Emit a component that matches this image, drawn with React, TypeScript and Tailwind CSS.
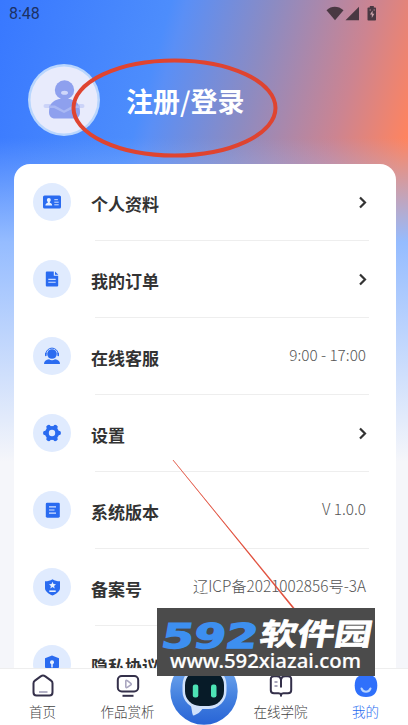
import type { ReactNode } from 'react'

interface MenuItem {
  label: string
  icon: ReactNode
  value?: string
  arrow?: boolean
}

const menuItems: MenuItem[] = [
  {
    label: '个人资料',
    arrow: true,
    icon: (
      <>
        <rect x="1" y="3.5" width="18" height="13" rx="1.6" fill="#2a6bf0" />
        <circle cx="6.8" cy="8" r="2" fill="#e8f1ff" />
        <path d="M3.4 13.6c0-2 1.6-2.4 2.4-2.8V9h2v1.8c.8.4 2.4.8 2.4 2.8z" fill="#e8f1ff" />
        <path d="M12.3 7.7h3.6M12.3 10.2h4.4M12.3 12.8h4.4" stroke="#cfe0ff" strokeWidth="1" />
      </>
    ),
  },
  {
    label: '我的订单',
    arrow: true,
    icon: (
      <>
        <path d="M4.8 2.5h7v4.2h4.4v9.8a1 1 0 0 1-1 1H4.8a1 1 0 0 1-1-1v-13a1 1 0 0 1 1-1z" fill="#2a6bf0" />
        <path d="M13 2.6l3.3 3.2H13z" fill="#2a6bf0" />
        <path d="M6.3 10.4h7.4M6.3 13.3h7.4" stroke="#cfe0ff" strokeWidth="1.1" />
      </>
    ),
  },
  {
    label: '在线客服',
    value: '9:00 - 17:00',
    icon: (
      <>
        <circle cx="10" cy="8" r="4.8" fill="#2a6bf0" />
        <path d="M3.8 8.3a6.2 6.2 0 0 1 12.4 0" fill="none" stroke="#2a6bf0" strokeWidth="1" />
        <rect x="3" y="6.7" width="1.6" height="3.6" rx=".8" fill="#2a6bf0" />
        <rect x="15.4" y="6.7" width="1.6" height="3.6" rx=".8" fill="#2a6bf0" />
        <path d="M2 18c0-3 2-4.3 5-4.7 1.6 1.2 4.4 1.2 6 0 3 .4 5 1.7 5 4.7z" fill="#2a6bf0" />
      </>
    ),
  },
  {
    label: '设置',
    arrow: true,
    icon: (
      <>
        <circle cx="10" cy="10" r="7" fill="#2a6bf0" />
        <path
          d="M3.300 10h13.400M6.600 4.200l6.800 11.600M13.400 4.200 6.600 15.800"
          stroke="#2a6bf0"
          strokeWidth="4.6"
          strokeLinecap="round"
        />
        <circle cx="10" cy="10" r="3.2" fill="#e0ebfe" />
      </>
    ),
  },
  {
    label: '系统版本',
    value: 'V 1.0.0',
    icon: (
      <>
        <rect x="3.8" y="2.7" width="14" height="15" rx="1.4" fill="#2a6bf0" />
        <path d="M7 6.9h7M7 10h5.5M7 13.2h7" stroke="#d6e4ff" strokeWidth="1.2" />
      </>
    ),
  },
  {
    label: '备案号',
    value: '辽ICP备2021002856号-3A',
    icon: (
      <>
        <path d="M10.5 2.2c2.3 1.4 4.5 2 7.5 2v7c0 3.3-4 5.8-7.5 7.4C7 17 3 14.5 3 11.2v-7c3 0 5.2-.6 7.5-2z" fill="#2a6bf0" />
        <path d="m10.5 4.8 1 2.3 2.5.2-1.9 1.6.6 2.5-2.2-1.3-2.2 1.3.6-2.5L7 7.3l2.5-.2z" fill="#e8f1ff" />
        <path d="M7.3 14.2h6.4" stroke="#e8f1ff" strokeWidth="1.6" />
      </>
    ),
  },
  {
    label: '隐私协议',
    icon: (
      <>
        <path d="m10 1.5 7 2.7v8c0 3.3-3.5 5.3-7 6.8-3.5-1.5-7-3.5-7-6.8v-8z" fill="#2a6bf0" />
        <circle cx="10" cy="8.3" r="2" fill="#e8f1ff" />
        <path d="M10 8.5v5" stroke="#e8f1ff" strokeWidth="1.5" />
      </>
    ),
  },
]

function StatusBar() {
  return (
    <div className="flex h-7 items-center justify-between pl-[9px] pr-[32px]">
      <span className="font-['Roboto',sans-serif] text-base leading-7 text-[#1c3164]">8:48</span>
      <svg width="50" height="16" viewBox="0 0 50 16" fill="#493842">
        <path d="M.5 4.3C5.5-.3 12-.3 17.500 4.3L9 14.2z" />
        <path d="M33 .8v13.4H19.5z" />
        <path d="M43.8 0h4v1.5h1.5a.8.8 0 0 1 .7.8v11.4a.8.8 0 0 1-.8.8h-6.9a.8.8 0 0 1-.8-.8V2.3a.8.8 0 0 1 .8-.8h1.5z" />
        <path d="M46.6 4.5l-2.6 4h1.800v3.5l2.6-4.3h-1.8z" fill="#c9a3aa" />
        <path d="M43.5 4H45M47.5 4H49" stroke="#b48490" strokeWidth="1.2" />
      </svg>
    </div>
  )
}

function Avatar() {
  return (
    <svg width="72" height="72" viewBox="0 0 72 72">
      <circle cx="36" cy="36" r="36" fill="#b9d6fd" />
      <circle cx="36" cy="36" r="33.5" fill="#e8ebfc" />
      <rect x="15.5" y="40" width="41" height="4" rx="2" fill="#cbd3f8" />
      <path d="M31 35c-6 1.5-10 5-10 13 0 4 2 6.5 6 6.5h19c4 0 6-2.500 6-6.5 0-8-4-11.5-10-13z" fill="#8ea0ee" />
      <circle cx="36.5" cy="26" r="9.7" fill="#8ea0ee" />
      <ellipse cx="36.5" cy="28.8" rx="3.5" ry="2" fill="#cfd7fa" />
      <path d="M21 41.5h6l9 5 9-5h7v2.5h-6l-10 5-10-5h-5z" fill="#a9b8f4" />
    </svg>
  )
}

function MenuRow({ item }: { item: MenuItem }) {
  return (
    <div className="flex h-[77px] shrink-0 items-start pl-[19px]">
      <div className="mt-[19px] flex size-[38px] shrink-0 items-center justify-center rounded-full bg-[#e0ebfe]">
        <svg width="20" height="20" viewBox="0 0 20 20">{item.icon}</svg>
      </div>
      <div className="ml-5 flex h-full flex-1 items-start justify-between">
        <span className="mt-[27px] text-[17px] leading-[26px] font-bold whitespace-nowrap text-[#333]">{item.label}</span>
        {item.value && (
          <span className="mt-[24px] mr-[30px] text-[15.3px] leading-[24px] font-light whitespace-nowrap text-[#555]">
            {item.value}
          </span>
        )}
        {item.arrow && (
          <svg className="mt-[32px] mr-[29px]" width="9" height="13" viewBox="0 0 9 13">
            <path d="m2 1.5 5 5-5 5" fill="none" stroke="#333" strokeWidth="2.2" />
          </svg>
        )}
      </div>
    </div>
  )
}

function NavItem({ label, active, children }: { label: string; active?: boolean; children: ReactNode }) {
  return (
    <div className="flex flex-col items-center pt-[5px]">
      <svg width="24" height="24" viewBox="0 0 24 24" fill="none" stroke="#34304a" strokeWidth="2">
        {children}
      </svg>
      <span className={`mt-[3px] text-[13.5px] leading-5 font-light ${active ? 'text-[#2a6bf0]' : 'text-[#444]'}`}>{label}</span>
    </div>
  )
}

function RobotButton() {
  return (
    <svg className="-mt-[12px]" width="68" height="68" viewBox="0 0 68 68">
      <defs>
        <linearGradient id="robot" x1="0" y1="0" x2="0" y2="1">
          <stop offset="0" stopColor="#80b4f2" />
          <stop offset=".6" stopColor="#4380df" />
          <stop offset="1" stopColor="#2864d6" />
        </linearGradient>
      </defs>
      <circle cx="34" cy="34" r="33.7" fill="url(#robot)" />
      <rect x="12.5" y="10" width="44" height="42" rx="18" fill="#cfe1fb" />
      <path d="M20 47c2 3 1.500 8 3 11.500 4-.5 8-4 10-7.500z" fill="#cfe1fb" />
      <rect x="15" y="13" width="39" height="36" rx="15" fill="#071b28" />
      <rect x="22.8" y="27.500" width="5.5" height="13" rx="2.2" fill="#4de3b5" />
      <rect x="41" y="27.500" width="5.5" height="13" rx="2.2" fill="#4de3b5" />
    </svg>
  )
}

function BottomNav() {
  return (
    <nav className="grid h-[57px] shrink-0 grid-cols-[85px_85px_68px_85px_85px] border-t border-[#eee] bg-white">
      <NavItem label="首页">
        <path d="M9.7 2.4 3.9 6.6C2.800 7.4 2.500 8 2.500 9.2v9c0 2 1 3.3 3 3.3h13c2 0 3-1.3 3-3.3v-9c0-1.2-.3-1.8-1.4-2.6l-5.8-4.200c-1.700-1.200-2.900-1.200-4.600 0z" />
        <path d="M8 18h8.5" stroke="#b4b2c6" />
      </NavItem>
      <NavItem label="作品赏析">
        <rect x="1.8" y="2" width="20.4" height="15.5" rx="4" />
        <path d="M6.5 21.8h11" />
        <path d="M9.8 7v5.8c0 1 .8 1 1.5.6l3.5-2.5c.6-.5.6-1 0-1.5l-3.5-2.8c-.7-.5-1.5-.5-1.5.4z" stroke="#aaa6c0" strokeWidth="1.6" />
      </NavItem>
      <RobotButton />
      <NavItem label="在线学院">
        <path d="M12 5.5C11.500 3 10 2.200 8 2.200H5c-2 0-3.200 1.200-3.200 3v11c0 2 1.200 3 3.200 3h4.500c1 0 2 .3 2.500 1.300.5-1 1.500-1.300 2.500-1.300H19c2 0 3.200-1 3.200-3v-11c0-1.800-1.200-3-3.200-3h-3c-2 0-3.500.8-4 3.300v8" />
        <path d="M5.5 8h3M5.5 12h3" stroke="#8d89a6" strokeWidth="1.5" />
        <path d="M12 20v2.5" />
      </NavItem>
      <NavItem label="我的" active>
        <path d="M12 .5C4 .5.7 4.3.7 11.5S4 23 12 23s11.3-4.300 11.3-11.500S20 .5 12 .5z" fill="#2f70fb" stroke="none" />
        <path d="M7.5 14.5c1.800 4.3 7.2 4.3 9 0" stroke="#b9d5ff" strokeLinecap="round" />
      </NavItem>
    </nav>
  )
}

function Watermark() {
  return (
    <svg className="absolute top-[608px] left-[157px] bg-[#4b4b4b]" width="218" height="68" viewBox="0 0 218 68">
      <g transform="skewX(-10)">
        <text x="10" y="40" textLength="96" lengthAdjust="spacingAndGlyphs" fill="#3d8ff0" stroke="#3d8ff0" strokeWidth="1.4" fontFamily="DejaVu Sans, sans-serif" fontWeight="700" fontSize="34">592</text>
        <text x="108" y="37.5" textLength="112" lengthAdjust="spacingAndGlyphs" fill="#fff" stroke="#fff" strokeWidth=".7" fontFamily="Noto Sans CJK SC, sans-serif" fontWeight="700" fontSize="30">软件园</text>
      </g>
      <text x="13" y="60" textLength="191" lengthAdjust="spacingAndGlyphs" fill="#fff" stroke="#fff" strokeWidth=".2" fontFamily="Noto Sans, sans-serif" fontWeight="500" fontSize="19">www.592xiazai.com</text>
    </svg>
  )
}

export default function App() {
  return (
    <div className="relative flex h-[725px] w-[408px] flex-col overflow-hidden bg-[linear-gradient(180deg,transparent_138px,#95bcff_242px,#f5f6fa_462px),linear-gradient(106deg,#3878ff_0px,#4d8dfc_165px,#5a8ff6_180px,#8c8bc2_265px,#cc8491_360px,#ff845f_430px)] bg-[length:408px_725px,408px_242px] bg-no-repeat font-['Noto_Sans_CJK_SC',sans-serif]">
      <StatusBar />
      <header className="flex h-[136px] shrink-0 items-start pt-9 pl-7">
        <Avatar />
        <h1 className="mt-[17px] ml-[26px] text-[27px] leading-[40px] font-bold whitespace-nowrap text-white">
          注册<span className="font-medium">/</span>登录
        </h1>
      </header>
      <main className="mr-[12px] ml-[14px] min-h-0 flex-1 overflow-hidden rounded-t-[16px] bg-white">
        {menuItems.map((item, i) => (
          <div key={item.label}>
            {i > 0 && <div className="-mt-px mr-[27px] ml-[81px] h-px bg-[#eee]" />}
            <MenuRow item={item} />
          </div>
        ))}
      </main>
      <BottomNav />

      {/* Hand-drawn marks over the page */}
      <svg className="absolute inset-0" width="408" height="725" fill="none" stroke="#df4430">
        <ellipse cx="174.5" cy="108" rx="101" ry="47.5" strokeWidth="4" />
        <path d="M173 460 295 609 293.5 609z" fill="#df4430" strokeWidth=".5" />
      </svg>
      <Watermark />
    </div>
  )
}
